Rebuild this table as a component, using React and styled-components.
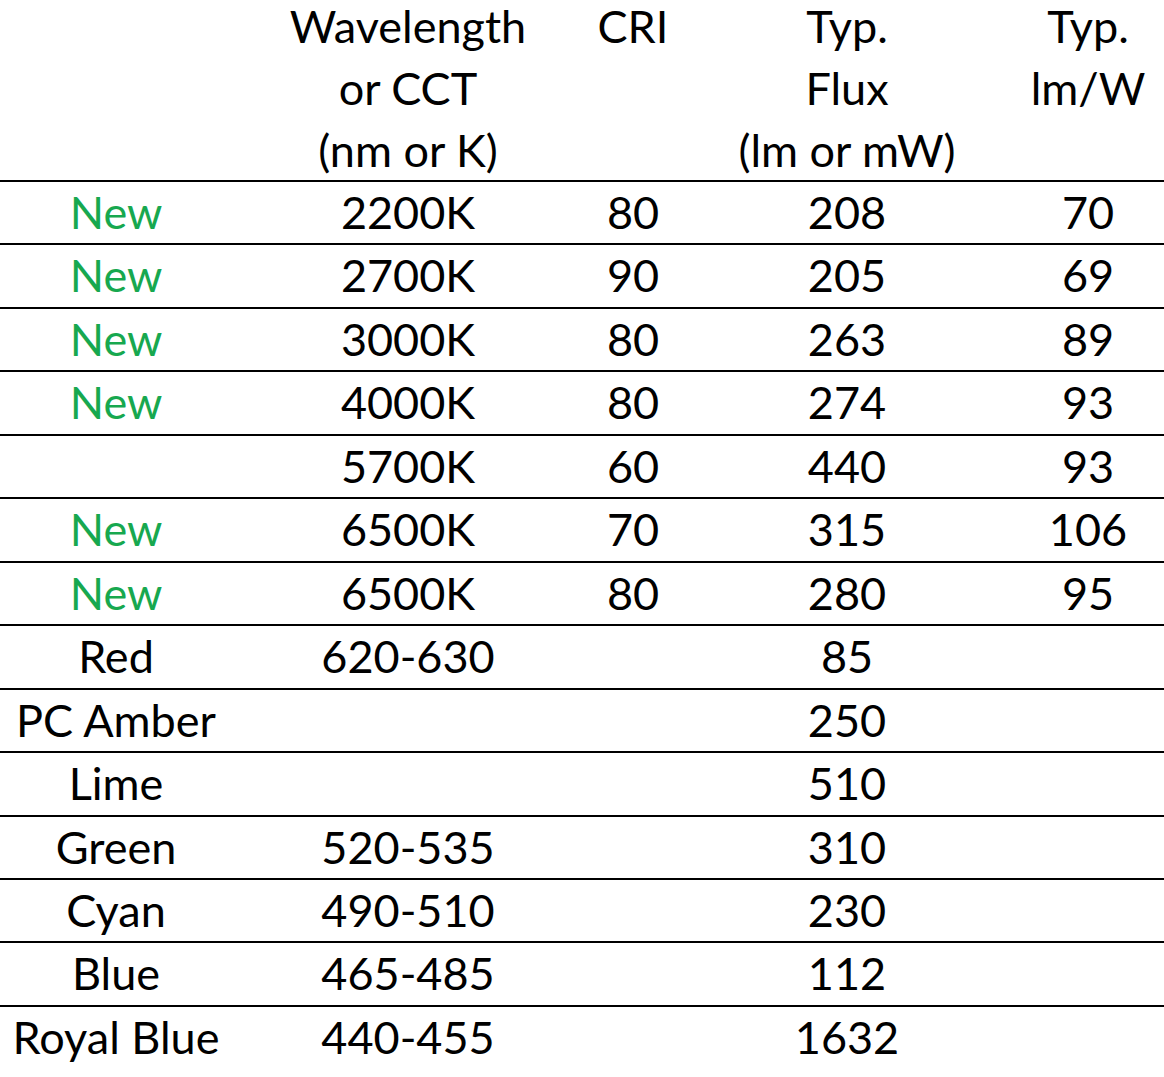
import React from "react";
import styled, { createGlobalStyle } from "styled-components";

const Global = createGlobalStyle`
  html, body { margin: 0; padding: 0; background: #ffffff; }
  body { font-family: "Lato", "Open Sans", sans-serif; color: #000; }
`;

const COLS = "232px 352px 98px 330px 152px";

const Table = styled.div`
  width: 1164px;
  height: 1077px;
  overflow: hidden;
  background: #fff;
  font-family: "Lato", "Open Sans", sans-serif;
  font-size: 45px;
  color: #000;
`;

const HeaderRow = styled.div`
  display: grid;
  grid-template-columns: ${COLS};
  height: 180px;
  border-bottom: 2px solid #000;
  box-sizing: border-box;
  height: 182px;
`;

const HeaderCell = styled.div`
  text-align: center;
  line-height: 62px;
  margin-top: -5px;
`;

const Row = styled.div`
  display: grid;
  grid-template-columns: ${COLS};
  height: 63.46px;
  box-sizing: border-box;
  border-bottom: ${(p) => (p.$last ? "none" : "2px solid #000")};
`;

const Cell = styled.div`
  text-align: center;
  line-height: 61.46px;
  white-space: nowrap;
  color: ${(p) => (p.$green ? "#17a84f" : "#000")};
`;

const header = [
  [],
  ["Wavelength", "or CCT", "(nm or K)"],
  ["CRI"],
  ["Typ.", "Flux", "(lm or mW)"],
  ["Typ.", "lm/W"],
];

const rows = [
  ["New", "2200K", "80", "208", "70"],
  ["New", "2700K", "90", "205", "69"],
  ["New", "3000K", "80", "263", "89"],
  ["New", "4000K", "80", "274", "93"],
  ["", "5700K", "60", "440", "93"],
  ["New", "6500K", "70", "315", "106"],
  ["New", "6500K", "80", "280", "95"],
  ["Red", "620-630", "", "85", ""],
  ["PC Amber", "", "", "250", ""],
  ["Lime", "", "", "510", ""],
  ["Green", "520-535", "", "310", ""],
  ["Cyan", "490-510", "", "230", ""],
  ["Blue", "465-485", "", "112", ""],
  ["Royal Blue", "440-455", "", "1632", ""],
];

export default function App() {
  return (
    <>
      <Global />
      <Table>
        <HeaderRow>
          {header.map((lines, i) => (
            <HeaderCell key={i}>
              {lines.map((l, j) => (
                <div key={j}>{l}</div>
              ))}
            </HeaderCell>
          ))}
        </HeaderRow>
        {rows.map((r, i) => (
          <Row key={i} $last={i === rows.length - 1}>
            {r.map((c, j) => (
              <Cell key={j} $green={c === "New"}>
                {c}
              </Cell>
            ))}
          </Row>
        ))}
      </Table>
    </>
  );
}
